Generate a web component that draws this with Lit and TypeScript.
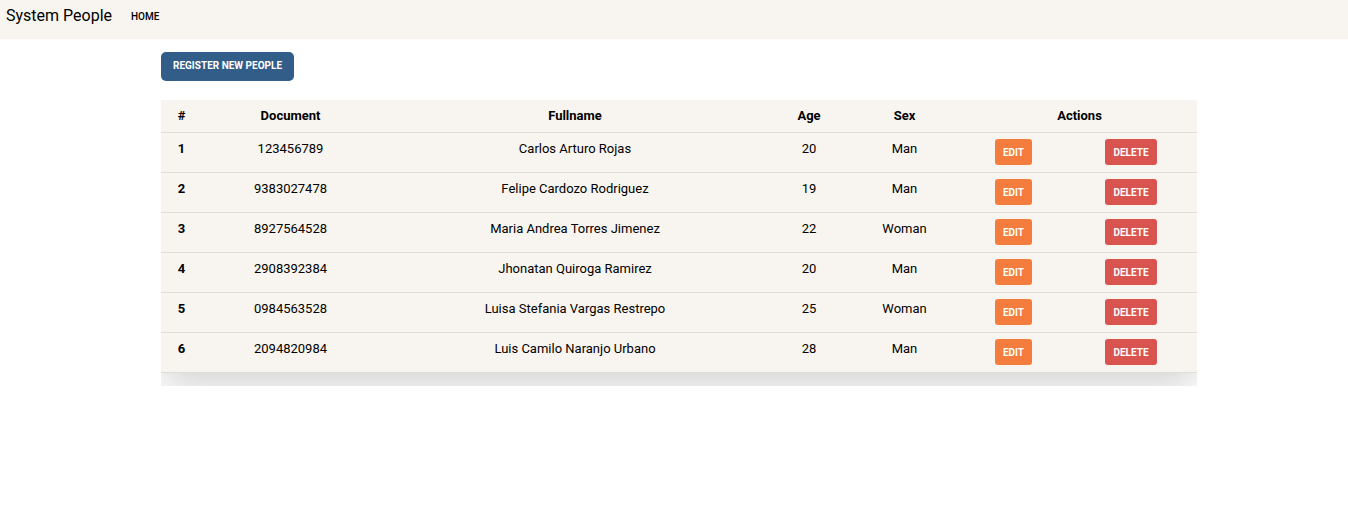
import { LitElement, html, css } from "lit";
import { customElement, state } from "lit/decorators.js";

interface Person {
  document: string;
  fullname: string;
  age: number;
  sex: "Man" | "Woman";
}

@customElement("app-root")
export class AppRoot extends LitElement {
  static styles = css`
    :host {
      display: block;
      font-family: Roboto, "Liberation Sans", sans-serif;
      font-size: 13px;
      line-height: 20px;
      color: #000;
    }
    .navbar {
      display: flex;
      align-items: center;
      gap: 19px;
      padding: 3px 6px 11px;
      background: #f8f5f0;
    }
    .brand {
      font-size: 16px;
      line-height: 25px;
      color: #000;
      text-decoration: none;
    }
    .link {
      padding-top: 2px;
      font-size: 10px;
      font-weight: 500;
      color: #000;
      text-decoration: none;
      text-transform: uppercase;
    }
    .content {
      padding: 13px 0 0 10px;
    }
    .container {
      max-width: 1036px;
      margin: 0 auto;
    }
    .btn {
      display: inline-block;
      box-sizing: border-box;
      border: 0;
      margin: 0;
      font-family: inherit;
      font-size: 10px;
      font-weight: 700;
      color: #fff;
      text-transform: uppercase;
      vertical-align: top;
      cursor: pointer;
    }
    .primary {
      height: 29px;
      padding: 0 12px 2px;
      border-radius: 5px;
      background: #325d88;
    }
    .small {
      height: 26px;
      padding: 0 8px;
      border-radius: 3px;
    }
    .edit {
      background: #f47c3c;
    }
    .delete {
      background: #d9534f;
    }
    .table-wrap {
      margin-top: 19px;
      padding-bottom: 13px;
      overflow: hidden;
    }
    .table {
      width: 100%;
      table-layout: fixed;
      border-collapse: separate;
      border-spacing: 0;
      text-align: center;
      background: #f8f5f0;
      box-shadow: 0 13px 38px rgba(0, 0, 0, 0.175);
    }
    .table th,
    .table td {
      padding: 6px;
      border-bottom: 1px solid #dfddd8;
      vertical-align: top;
    }
    .table tbody td {
      padding-bottom: 7px;
    }
    .c-num { width: 41px; }
    .c-doc { width: 177px; }
    .c-name { width: 392px; }
    .c-age { width: 76px; }
    .c-sex { width: 115px; }
    .c-edit { width: 103px; }
    .c-delete { width: 132px; }
  `;

  @state()
  private people: Person[] = [
    { document: "123456789", fullname: "Carlos Arturo Rojas", age: 20, sex: "Man" },
    { document: "9383027478", fullname: "Felipe Cardozo Rodriguez", age: 19, sex: "Man" },
    { document: "8927564528", fullname: "Maria Andrea Torres Jimenez", age: 22, sex: "Woman" },
    { document: "2908392384", fullname: "Jhonatan Quiroga Ramirez", age: 20, sex: "Man" },
    { document: "0984563528", fullname: "Luisa Stefania Vargas Restrepo", age: 25, sex: "Woman" },
    { document: "2094820984", fullname: "Luis Camilo Naranjo Urbano", age: 28, sex: "Man" },
  ];

  private remove(person: Person) {
    this.people = this.people.filter((p) => p !== person);
  }

  render() {
    return html`
      <nav class="navbar">
        <a class="brand" href="#">System People</a>
        <a class="link" href="#">Home</a>
      </nav>
      <main class="content">
        <div class="container">
          <button class="btn primary" type="button">Register new people</button>
          <div class="table-wrap">
            <table class="table">
              <colgroup>
                <col class="c-num" />
                <col class="c-doc" />
                <col class="c-name" />
                <col class="c-age" />
                <col class="c-sex" />
                <col class="c-edit" />
                <col class="c-delete" />
              </colgroup>
              <thead>
                <tr>
                  <th scope="col">#</th>
                  <th scope="col">Document</th>
                  <th scope="col">Fullname</th>
                  <th scope="col">Age</th>
                  <th scope="col">Sex</th>
                  <th scope="colgroup" colspan="2">Actions</th>
                </tr>
              </thead>
              <tbody>
                ${this.people.map(
                  (p, i) => html`
                    <tr>
                      <th scope="row">${i + 1}</th>
                      <td>${p.document}</td>
                      <td>${p.fullname}</td>
                      <td>${p.age}</td>
                      <td>${p.sex}</td>
                      <td>
                        <button class="btn small edit" type="button">Edit</button>
                      </td>
                      <td>
                        <button class="btn small delete" type="button" @click=${() => this.remove(p)}>
                          Delete
                        </button>
                      </td>
                    </tr>
                  `,
                )}
              </tbody>
            </table>
          </div>
        </div>
      </main>
    `;
  }
}
